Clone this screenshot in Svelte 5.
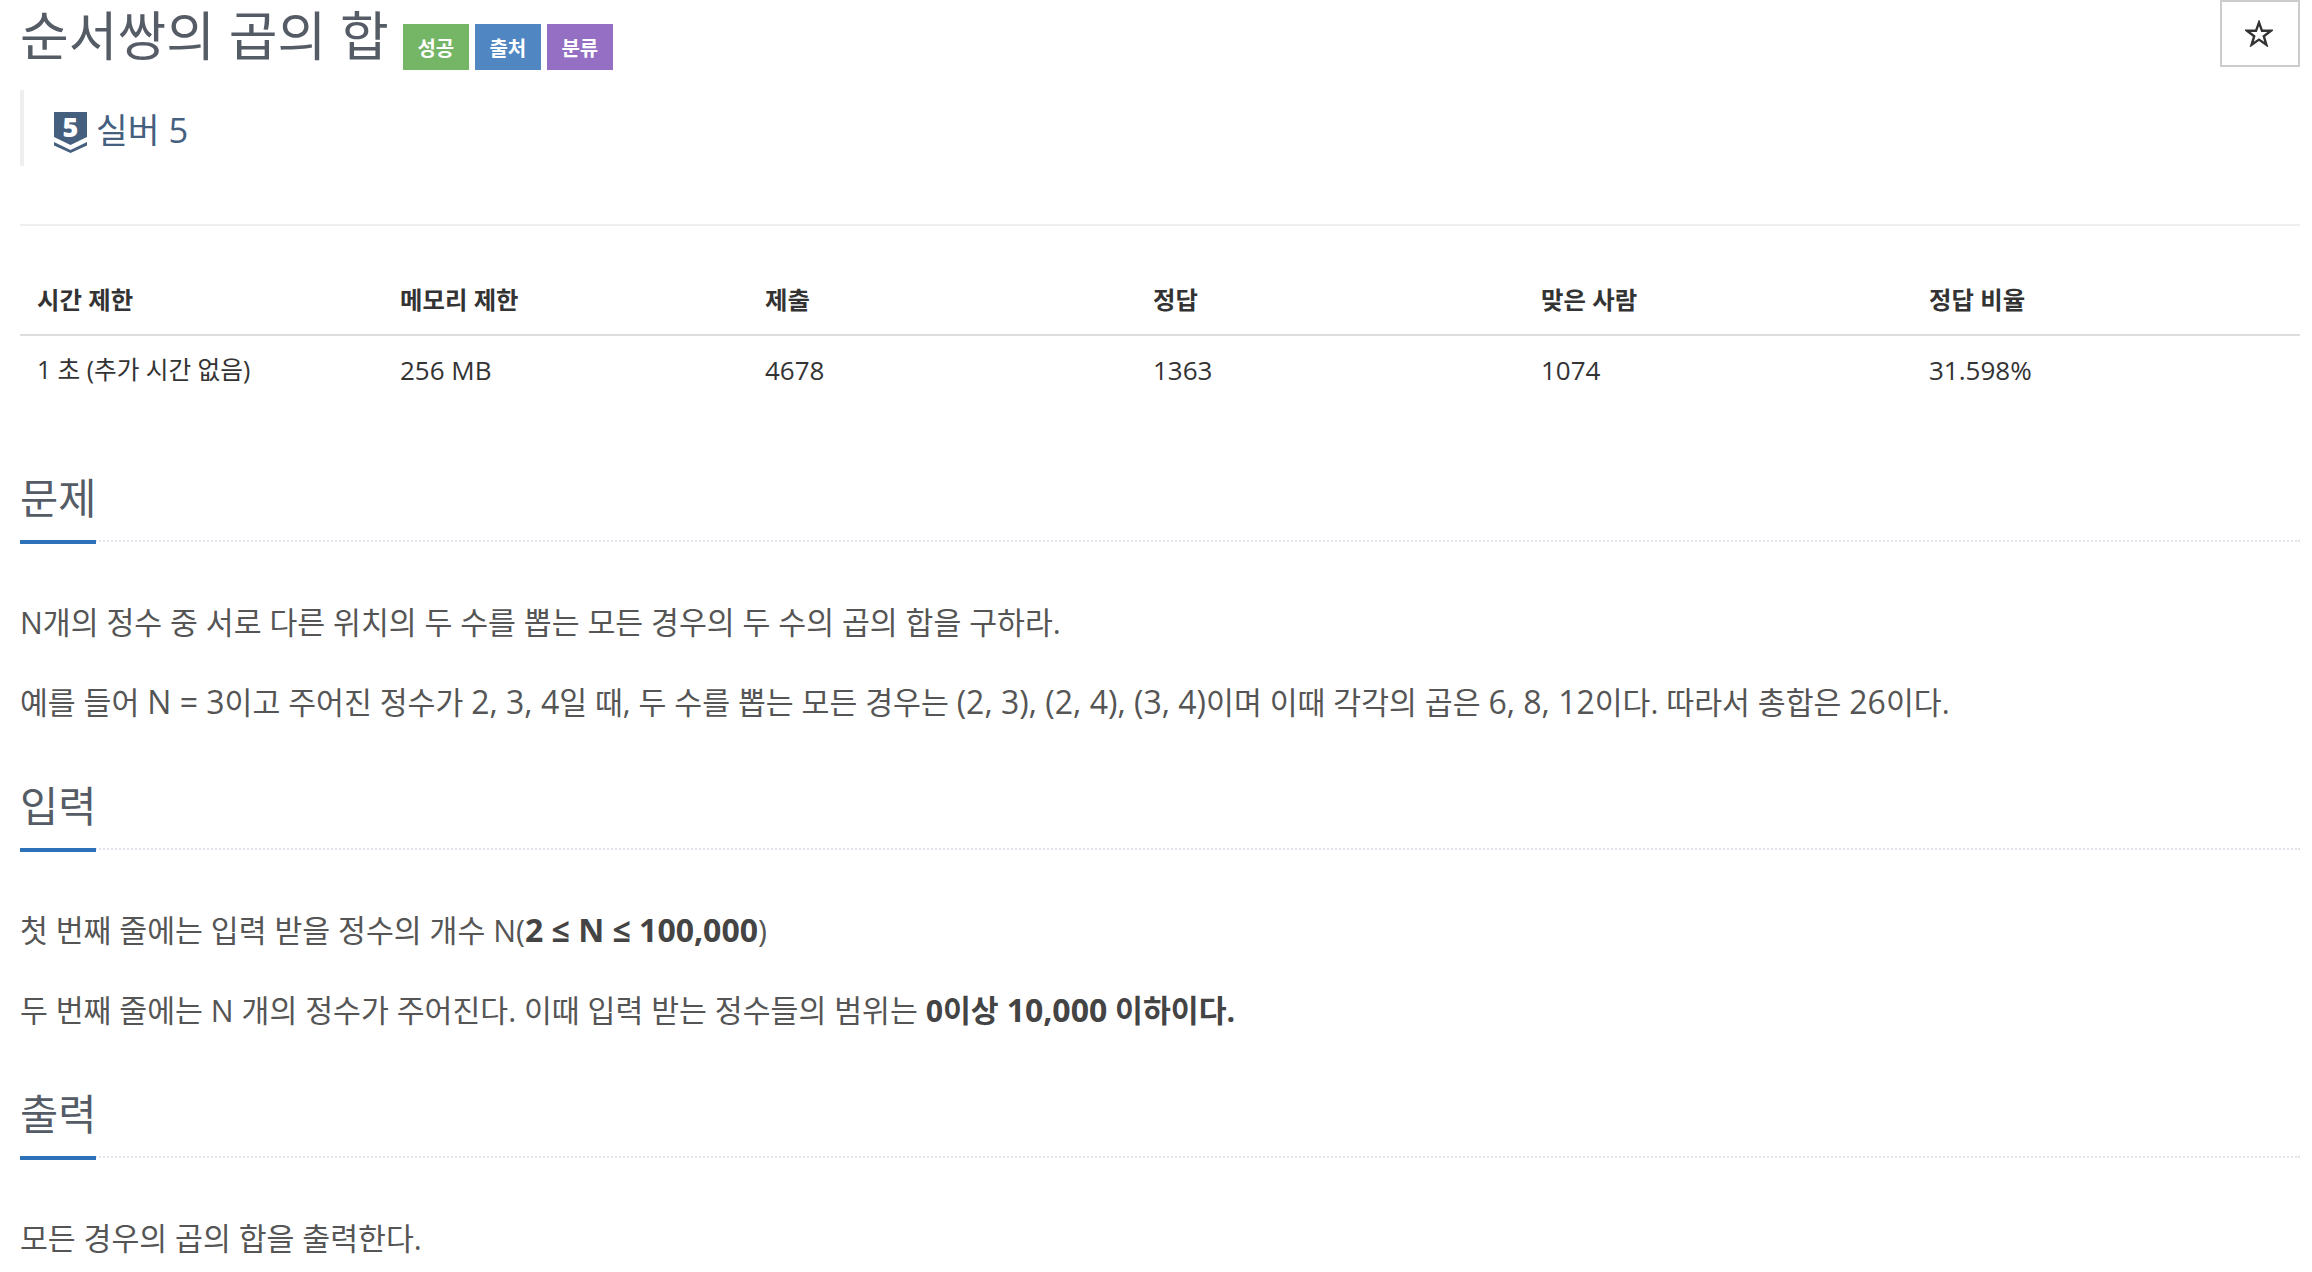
<script>
  const stats = [
    { head: '시간 제한', value: '1 초 (추가 시간 없음)' },
    { head: '메모리 제한', value: '256 MB' },
    { head: '제출', value: '4678' },
    { head: '정답', value: '1363' },
    { head: '맞은 사람', value: '1074' },
    { head: '정답 비율', value: '31.598%' }
  ];
</script>

<div class="page">
  <div class="title-row">
    <h1>순서쌍의 곱의 합</h1>
    <div class="labels">
      <span class="label green">성공</span>
      <span class="label blue">출처</span>
      <span class="label purple">분류</span>
    </div>
    <button class="star-btn" aria-label="star">
      <svg viewBox="0 0 28 27" width="28" height="27">
        <polygon points="14,2.5 17,10.8 26,10.8 18.8,16.2 21.4,24.8 14,19.6 6.6,24.8 9.2,16.2 2,10.8 11,10.8" fill="none" stroke="#333" stroke-width="2.4"/>
      </svg>
    </button>
  </div>

  <div class="tier">
    <svg class="shield" viewBox="0 0 33 41" width="33" height="41">
      <path d="M0 0H33V25L16.5 33L0 25Z" fill="#45607f"/>
      <path d="M0 30L16.5 38L33 30V33.5L16.5 41L0 33.5Z" fill="#45607f"/>
      <text x="16.5" y="25" text-anchor="middle" class="shield-num">5</text>
    </svg>
    <span>실버 5</span>
  </div>

  <div class="rule"></div>

  <div class="stats">
    {#each stats as s}
      <div class="th">{s.head}</div>
    {/each}
    {#each stats as s}
      <div class="td">{s.value}</div>
    {/each}
  </div>

  <section class="first">
    <div class="head"><h2>문제</h2></div>
    <p>N개의 정수 중 서로 다른 위치의 두 수를 뽑는 모든 경우의 두 수의 곱의 합을 구하라.</p>
    <p>예를 들어 <span class="num">N = 3</span>이고 주어진 정수가 <span class="num">2, 3, 4</span>일 때, 두 수를 뽑는 모든 경우는 <span class="num">(2, 3), (2, 4), (3, 4)</span>이며 이때 각각의 곱은 <span class="num">6, 8, 12</span>이다. 따라서 총합은 <span class="num">26</span>이다.</p>
  </section>

  <section>
    <div class="head"><h2>입력</h2></div>
    <p>첫 번째 줄에는 입력 받을 정수의 개수 N(<b class="num">2 ≤ N ≤ 100,000</b>)</p>
    <p>두 번째 줄에는 N 개의 정수가 주어진다. 이때 입력 받는 정수들의 범위는 <b>0이상 <span class="num">10,000</span> 이하이다.</b></p>
  </section>

  <section>
    <div class="head"><h2>출력</h2></div>
    <p>모든 경우의 곱의 합을 출력한다.</p>
  </section>
</div>

<style>
  :global(body) {
    margin: 0;
    background: #fff;
  }

  .page {
    box-sizing: border-box;
    width: 2312px;
    height: 1272px;
    overflow: hidden;
    padding: 0 12px 0 20px;
    font-family: "Open Sans", "Noto Sans CJK KR", sans-serif;
    color: #333;
  }

  .title-row {
    display: flex;
    align-items: flex-start;
    height: 90px;
  }

  h1 {
    margin: 0;
    font-size: 53px;
    line-height: 72px;
    font-weight: 400;
    color: #555c66;
    white-space: nowrap;
  }

  .labels {
    display: flex;
    gap: 6px;
    margin: 24px 0 0 14px;
  }

  .label {
    width: 66px;
    height: 46px;
    display: flex;
    align-items: center;
    justify-content: center;
    color: #fff;
    font-size: 20px;
    font-weight: 700;
  }

  .green { background: #74b566; }
  .blue { background: #5087c2; }
  .purple { background: #956fc4; }

  .star-btn {
    box-sizing: border-box;
    margin-left: auto;
    width: 80px;
    height: 67px;
    padding: 0 2px 0 0;
    display: flex;
    align-items: center;
    justify-content: center;
    background: #fff;
    border: 2px solid #ccc;
  }

  .tier {
    box-sizing: border-box;
    height: 76px;
    border-left: 4px solid #eee;
    padding: 22px 0 0 30px;
    display: flex;
    align-items: flex-start;
    gap: 9px;
    font-size: 34.5px;
    line-height: 36px;
    color: #45607f;
  }

  .shield {
    flex: none;
    overflow: visible;
  }

  .shield-num {
    font-family: "Open Sans", sans-serif;
    font-size: 27px;
    font-weight: 800;
    fill: #fff;
  }

  .rule {
    height: 2px;
    margin-top: 58px;
    background: #eee;
  }

  .stats {
    display: grid;
    grid-template-columns: 363px 365px 388px 388px 388px 388px;
    margin-top: 48px;
  }

  .th {
    padding: 0 0 0 17px;
    height: 60px;
    line-height: 52px;
    font-size: 24.4px;
    font-weight: 700;
    border-bottom: 2px solid #ddd;
  }

  .td {
    padding: 0 0 0 17px;
    height: 70px;
    line-height: 68px;
    font-size: 26px;
  }

  .td:nth-child(7) {
    font-size: 24.7px;
  }

  section {
    margin-top: 48px;
  }

  section.first {
    margin-top: 58px;
  }

  .head {
    height: 78px;
    border-bottom: 2px dotted #e2e3ea;
    box-sizing: border-box;
    position: relative;
  }

  h2 {
    box-sizing: border-box;
    display: inline-block;
    margin: 0;
    height: 80px;
    padding-top: 9px;
    font-size: 41.5px;
    line-height: 50px;
    font-weight: 400;
    color: #555c66;
    border-bottom: 4px solid #2d72b8;
  }

  p {
    margin: 0 0 38px;
    font-size: 30.3px;
    line-height: 42px;
    color: #555;
    white-space: nowrap;
  }

  b {
    color: #444;
  }

  .num {
    font-size: 32px;
    line-height: 1;
  }

  .head + p {
    margin-top: 60px;
  }
</style>
